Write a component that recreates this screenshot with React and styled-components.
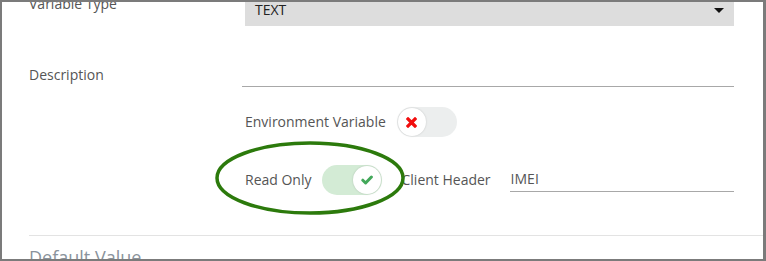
import React from "react";
import styled, { createGlobalStyle } from "styled-components";

const GlobalStyle = createGlobalStyle`
  html, body {
    margin: 0;
    padding: 0;
    background: #fff;
  }
  * {
    box-sizing: border-box;
  }
`;

const Frame = styled.div`
  position: relative;
  width: 766px;
  height: 261px;
  overflow: hidden;
  background: #fff;
  border-style: solid;
  border-color: #7b7b7b;
  border-width: 2px 3px 2px 2px;
  font-family: "Open Sans", "Liberation Sans", sans-serif;
`;

const Content = styled.div`
  margin-top: -9px;
  padding-left: 27px;
`;

const Row = styled.div`
  display: grid;
  grid-template-columns: 213px 1fr;
  align-items: ${({ $center }) => ($center ? "center" : "start")};
  padding-right: 29px;
  margin-top: ${({ $gap }) => $gap || 0}px;
`;

const Label = styled.div`
  font-size: 14px;
  line-height: 20px;
  color: #555;
  padding-top: ${({ $top }) => $top || 0}px;
  white-space: nowrap;
`;

const Select = styled.div`
  display: flex;
  align-items: center;
  justify-content: space-between;
  height: 33px;
  margin-left: 3px;
  padding: 0 10px;
  background: #dddddd;
  font-size: 14px;
  color: #222;
`;

const Caret = styled.span`
  width: 0;
  height: 0;
  margin-top: 2px;
  border-left: 5px solid transparent;
  border-right: 5px solid transparent;
  border-top: 5px solid #111;
`;

const Input = styled.div`
  flex: ${({ $grow }) => ($grow ? 1 : "none")};
  height: ${({ $h }) => $h || 30}px;
  margin-left: ${({ $ml }) => $ml || 0}px;
  border-bottom: 1px solid #a8a8a8;
  font-size: 14px;
  line-height: 22px;
  color: #555;
  padding-left: 1px;
`;

const Inline = styled.div`
  display: flex;
  align-items: center;
  margin-left: 3px;
`;

const Track = styled.div`
  display: flex;
  align-items: center;
  justify-content: ${({ $on }) => ($on ? "flex-end" : "flex-start")};
  width: 60px;
  height: 30px;
  padding: 0 1px;
  border-radius: 15px;
  background: ${({ $on }) => ($on ? "#d3ebd5" : "#eceeee")};
  margin-left: ${({ $ml }) => $ml || 0}px;
  margin-right: ${({ $mr }) => $mr || 0}px;
`;

const Knob = styled.div`
  display: flex;
  align-items: center;
  justify-content: center;
  width: 28px;
  height: 28px;
  border-radius: 50%;
  background: #fff;
  box-shadow: 0 0 2px rgba(0, 0, 0, 0.18);
`;

const Divider = styled.div`
  margin-top: 40px;
  height: 1px;
  background: #e3e3e3;
`;

const Heading = styled.div`
  margin-top: 9px;
  font-size: 18px;
  line-height: 24px;
  color: #8a939c;
`;

const Highlight = styled.svg`
  position: absolute;
  left: 212px;
  top: 138px;
  pointer-events: none;
`;

const CrossIcon = () => (
  <svg width="11" height="11" viewBox="0 0 11 11">
    <path
      d="M2 2 L9 9 M9 2 L2 9"
      stroke="#f20d0d"
      strokeWidth="3.2"
      strokeLinecap="square"
      fill="none"
    />
  </svg>
);

const CheckIcon = () => (
  <svg width="12" height="10" viewBox="0 0 12 10">
    <path
      d="M1.8 5.2 L4.6 8 L10.4 2"
      stroke="#43a85a"
      strokeWidth="3"
      strokeLinecap="round"
      strokeLinejoin="round"
      fill="none"
    />
  </svg>
);

const Toggle = ({ on, ml, mr }) => (
  <Track $on={on} $ml={ml} $mr={mr}>
    <Knob>{on ? <CheckIcon /> : <CrossIcon />}</Knob>
  </Track>
);

export default function App() {
  return (
    <>
      <GlobalStyle />
      <Frame>
        <Content>
          <Row>
            <Label $top={1}>Variable Type</Label>
            <Select>
              TEXT
              <Caret />
            </Select>
          </Row>
          <Row $gap={31}>
            <Label $top={8}>Description</Label>
            <Input />
          </Row>
          <Row $gap={20} $center>
            <span />
            <Inline>
              <Label>Environment Variable</Label>
              <Toggle ml={11} />
            </Inline>
          </Row>
          <Row $gap={28}>
            <span />
            <Inline>
              <Label>Read Only</Label>
              <Toggle on ml={10} mr={20} />
              <Label>Client Header</Label>
              <Input $h={24} $grow $ml={19}>
                IMEI
              </Input>
            </Inline>
          </Row>
          <Divider />
          <Heading>Default Value</Heading>
        </Content>
        <Highlight width="192" height="76" viewBox="0 0 192 76">
          <ellipse
            cx="96"
            cy="38"
            rx="93"
            ry="35"
            fill="none"
            stroke="#2c7a0c"
            strokeWidth="3.5"
          />
        </Highlight>
      </Frame>
    </>
  );
}
